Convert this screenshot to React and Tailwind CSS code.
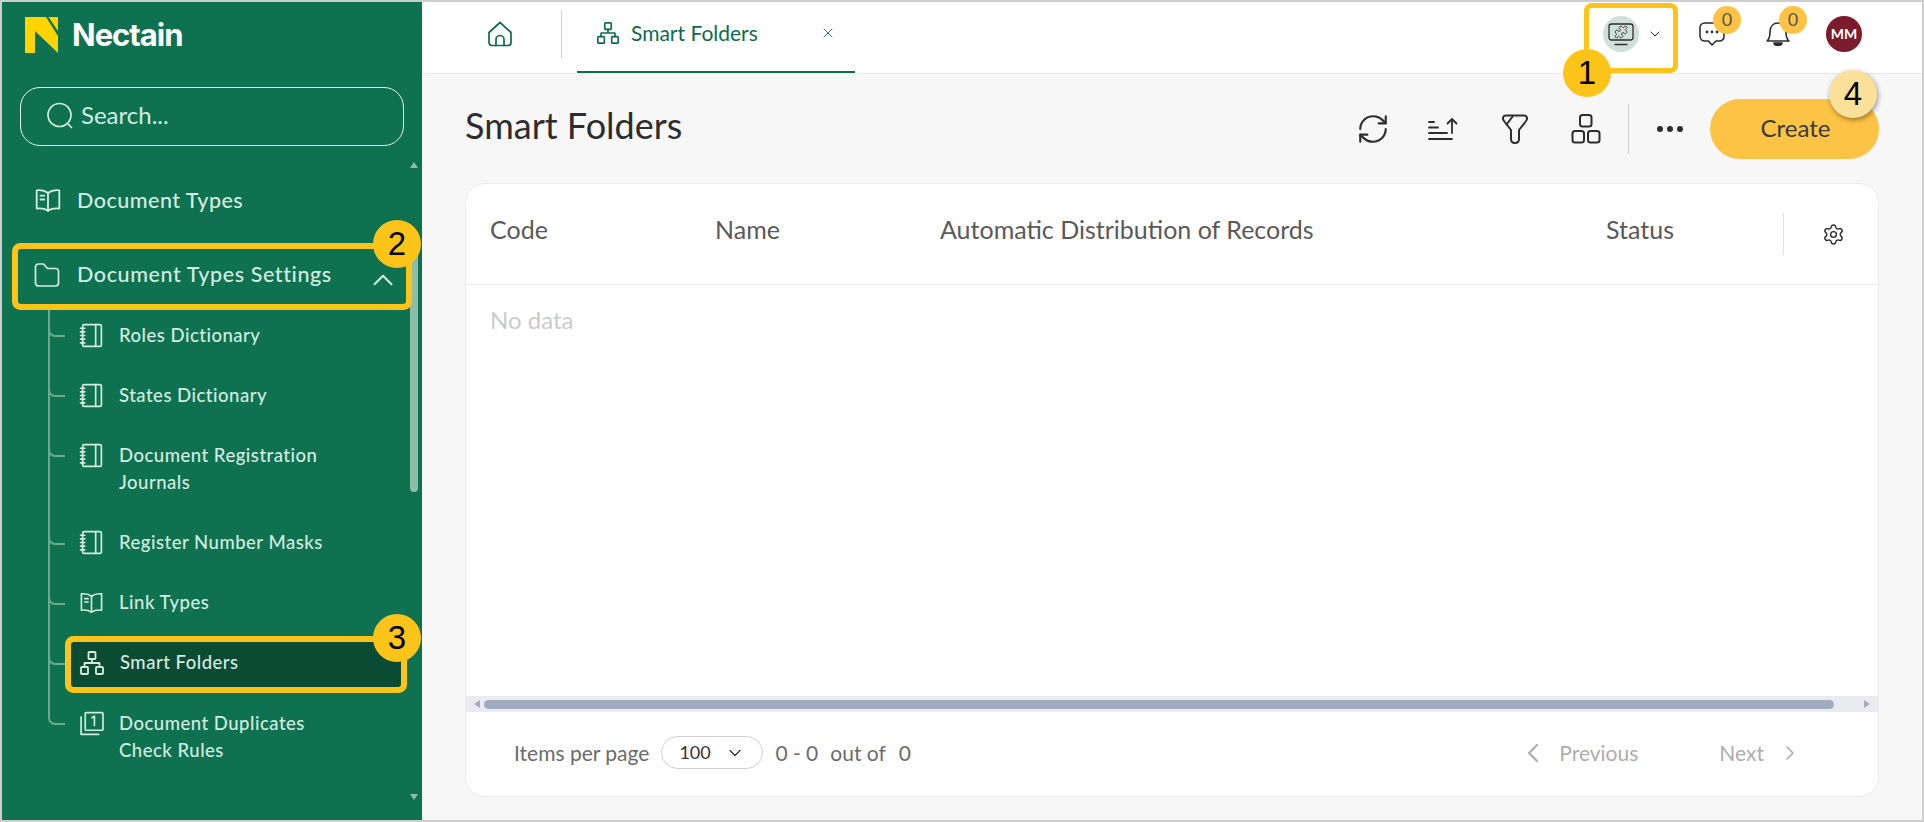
import React from 'react';
import { ChevronDown, ChevronLeft, ChevronRight, ChevronUp, Puzzle, RefreshCw, Settings, X } from 'lucide-react';

const Icon = ({ className, size = 24, view = 24, width = 1.7, children }) => (
    <svg width={size} height={size} viewBox={`0 0 ${view} ${view}`} fill="none" stroke="currentColor" strokeWidth={width} strokeLinecap="round" strokeLinejoin="round" className={className}>
        {children}
    </svg>
);

const Logo = () => (
    <svg width="33" height="36" viewBox="0 0 33 36">
        <path d="M0 0H21L33 19V36L10 14V36H0Z" fill="#ffd400" />
        <path d="M23.5 0H33V14Z" fill="#ffd400" />
    </svg>
);

const BookIcon = ({ size = 28 }) => (
    <Icon size={size} view={26} width={1.7}>
        <path d="M13 6.5C10.5 4.5 6.5 3.5 2.5 4V21C6.5 20.5 10 21 13 23C16 21 19.5 20.5 23.5 21V4C19.5 3.5 15.5 4.5 13 6.5Z" />
        <path d="M13 6.5V23M6 9H9.5M6 12.5H9.5" />
    </Icon>
);

const NotebookIcon = () => (
    <Icon size={25} width={1.6}>
        <rect x="3.5" y="1.5" width="18" height="21" rx="1.5" />
        <path d="M16 1.5V22.5M1.5 5H5.5M1.5 8.5H5.5M1.5 12H5.5M1.5 15.5H5.5M1.5 19H5.5" />
    </Icon>
);

const TreeIcon = ({ size = 26 }) => (
    <Icon size={size} view={26} width={1.8}>
        <rect x="9.5" y="2" width="7" height="7" rx="0.8" />
        <rect x="2" y="17" width="7" height="7" rx="0.8" />
        <rect x="17" y="17" width="7" height="7" rx="0.8" />
        <path d="M13 9V13M5.5 17V13H20.5V17" />
    </Icon>
);

const DuplicateIcon = () => (
    <Icon size={25} width={1.6}>
        <rect x="6" y="1.5" width="17" height="17" rx="1" />
        <path d="M2 5.5V22.5H19M12.5 6.5L14.8 5V14" />
    </Icon>
);

const HomeIcon = () => (
    <Icon size={28} view={28} width={1.7}>
        <path d="M3 12.5L14 2.5L25 12.5V22.5C25 24.5 23.5 25.5 22 25.5H6C4.5 25.5 3 24.5 3 22.5Z" />
        <path d="M10 25.5V19.5C10 17 12 15.5 14 15.5C16 15.5 18 17 18 19.5V25.5" />
    </Icon>
);

const WorkspaceIcon = () => (
    <Icon size={28} view={28} width={1.3}>
        <rect x="2" y="4" width="24" height="16" rx="2.5" />
        <path d="M8 24.5H20" />
        <Puzzle x="7" y="5" size={14} strokeWidth={1.4} />
    </Icon>
);

const ChatIcon = () => (
    <svg width="26" height="28" viewBox="0 0 26 28" fill="none" stroke="#2d2d2d" strokeWidth="1.6" strokeLinejoin="round">
        <path d="M6 3H20C23 3 25 5 25 8V16C25 19 23 21 20 21H17L13 25L9.5 21H6C3 21 1 19 1 16V8C1 5 3 3 6 3Z" />
        <circle cx="8" cy="12" r="0.6" fill="#2d2d2d" />
        <circle cx="13" cy="12" r="0.6" fill="#2d2d2d" />
        <circle cx="18" cy="12" r="0.6" fill="#2d2d2d" />
    </svg>
);

const BellIcon = () => (
    <svg width="26" height="28" viewBox="0 0 26 28" fill="none" stroke="#2d2d2d" strokeWidth="1.6" strokeLinejoin="round">
        <path d="M2 21C4.5 19 5 16 5 12C5 6 8.5 3 13 3C17.5 3 21 6 21 12C21 16 21.5 19 24 21Z" />
        <path d="M9 23H17C16.5 26 9.5 26 9 23Z" fill="#2d2d2d" />
    </svg>
);

const SortIcon = () => (
    <Icon size={32} view={32} width={1.8}>
        <path d="M1 9H6M1 14.5H10M1 20H19M1 26H24M24 20V6M19.5 10.5L24 6L28.5 10.5" />
    </Icon>
);

const FilterIcon = () => (
    <Icon size={32} view={32} width={2}>
        <path d="M7 2.5H25C28 2.5 29 5.5 27 8L20 17V26C20 28.5 18.5 30 16 30C13.5 30 12 28.5 12 26V17L5 8C3 5.5 4 2.5 7 2.5Z" />
        <path d="M14 3L7.5 11.5" />
    </Icon>
);

const AppsIcon = () => (
    <Icon size={32} view={32} width={2}>
        <rect x="10" y="2" width="11.5" height="11.5" rx="2.5" />
        <rect x="2.5" y="18" width="11.5" height="11.5" rx="2.5" />
        <rect x="18" y="18" width="11.5" height="11.5" rx="2.5" />
    </Icon>
);

const SearchIcon = () => (
    <Icon size={28} view={28} width={1.7}>
        <circle cx="13.5" cy="13" r="11.5" />
        <path d="M22 22L25.5 25.5" />
    </Icon>
);

const FolderIcon = () => (
    <Icon size={26} view={26} width={1.7}>
        <path d="M1.5 5C1.5 3 3 2 4.5 2H9.5L13.5 6.5H21.5C23.5 6.5 24.5 8 24.5 9.5V21C24.5 23 23 24 21.5 24H4.5C3 24 1.5 23 1.5 21Z" />
    </Icon>
);

const Marker = ({ n, className }) => (
    <div className={`absolute z-20 flex h-[48px] w-[48px] items-center justify-center rounded-full font-['Liberation_Sans',sans-serif] text-[33px] text-black ${className}`}>
        {n}
    </div>
);

const Badge = ({ className }) => (
    <span className={`absolute flex h-[28px] w-[28px] items-center justify-center rounded-full bg-[#fdc344] text-[18px] text-[#555] ${className}`}>0</span>
);

const children = [
    { label: 'Roles Dictionary', icon: <NotebookIcon /> },
    { label: 'States Dictionary', icon: <NotebookIcon /> },
    { label: 'Document Registration Journals', icon: <NotebookIcon /> },
    { label: 'Register Number Masks', icon: <NotebookIcon /> },
    { label: 'Link Types', icon: <BookIcon size={25} /> },
    { label: 'Smart Folders', icon: <TreeIcon size={26} />, active: true },
    { label: 'Document Duplicates Check Rules', icon: <DuplicateIcon /> },
];

function Sidebar() {
    return (
        <aside className="relative flex w-[420px] shrink-0 flex-col bg-[#0e7250] text-[#d5ebe1]">
            <div className="flex h-[85px] shrink-0 items-start gap-[14px] pl-[23px] pt-[15px]">
                <Logo />
                <span className="font-['Inter',sans-serif] pt-[1px] text-[31px] font-bold leading-[34px] tracking-[-1px] text-white">Nectain</span>
            </div>
            <div className="mx-[18px] flex h-[59px] shrink-0 items-center gap-[7px] rounded-[20px] border border-[#e6f2ec] pb-[2px] pl-[25px] text-[24px]">
                <SearchIcon />
                <span className="pb-[2px]">Search...</span>
            </div>

            <div className="mt-[23px] flex h-[62px] items-center gap-[15px] pl-[32px] text-[21.5px] font-medium tracking-[0.5px]">
                <BookIcon />
                <span>Document Types</span>
            </div>
            <div className="relative z-10 mx-[16px] mt-[18px] flex h-[55px] items-center gap-[17px] rounded-[3px] pb-[4px] pl-[16px] text-[21.5px] font-medium tracking-[0.6px] ring-[6px] ring-[#fcc419]">
                <FolderIcon />
                <span>Document Types Settings</span>
                <ChevronUp size={34} strokeWidth={1.4} className="absolute right-[6px] top-[14px]" />
            </div>

            <div className="relative mt-[1px]">
                <div className="absolute bottom-[62px] left-[46px] top-0 w-[2px] bg-[#6da892]" />
                {children.map((item) => (
                    <div key={item.label} className="relative flex py-[7px] pl-[69px] pr-[21px]">
                        <div className="absolute left-[46px] top-[24px] h-[8px] w-[17px] rounded-bl-[7px] border-b-2 border-l-2 border-[#6da892]" />
                        <div className={`flex flex-1 items-start gap-[15px] rounded-[3px] pl-[8px] text-[18.5px] font-medium leading-[27px] tracking-[0.5px] ${item.active ? 'mb-[-1px] mt-[2px] h-[45px] bg-[#0b4a33] pt-[7px] ring-[6px] ring-[#fcc419]' : 'py-[9.6px]'}`}>
                            <span className="mt-[1px] shrink-0">{item.icon}</span>
                            <span className="max-w-[225px]">{item.label}</span>
                        </div>
                    </div>
                ))}
            </div>

            {/* sidebar scrollbar */}
            <div className="absolute right-[4px] top-[160px] h-0 w-0 border-x-[4px] border-b-[6px] border-x-transparent border-b-[#8dbcab]" />
            <div className="absolute right-[4px] top-[250px] h-[240px] w-[8px] rounded-full bg-[#8dbcab]" />
            <div className="absolute bottom-[20px] right-[4px] h-0 w-0 border-x-[4px] border-t-[6px] border-x-transparent border-t-[#8dbcab]" />

            <Marker n="2" className="right-[1px] top-[218px] bg-[#fcc419]" />
            <Marker n="3" className="right-[1px] top-[612px] bg-[#fcc419]" />
        </aside>
    );
}

function TopBar() {
    return (
        <header className="relative flex h-[72px] shrink-0 items-center border-b border-[#e8e8e8] bg-white">
            <div className="mb-[7px] ml-[64px] text-[#0e6b4d]"><HomeIcon /></div>
            <div className="mb-[7px] ml-[47px] h-[48px] w-px bg-[#cfcfcf]" />
            <div className="ml-[15px] flex h-full w-[278px] items-center border-b-2 border-[#0e6b4d] pb-[7px] pl-[19px] text-[#0e6b4d]">
                <TreeIcon size={24} />
                <span className="ml-[11px] text-[21px]">Smart Folders</span>
                <X size={16} strokeWidth={1.3} className="ml-[62px]" />
            </div>
            <div className="ml-auto flex items-center pr-[60px]">
                <div className="relative flex h-[60px] w-[84px] items-center rounded-[3px] pb-[8px] pl-[14px] ring-[5px] ring-[#fcc419]">
                    <div className="flex h-[36px] w-[36px] items-center justify-center rounded-full bg-[#cfe0da] text-[#2d2d2d]"><WorkspaceIcon /></div>
                    <ChevronDown size={16} strokeWidth={1.5} className="ml-[8px] text-[#333]" />
                    <Marker n="1" className="bottom-[-29px] left-[-26px] bg-[#fcc419]" />
                </div>
                <div className="relative mb-[8px] ml-[26px]">
                    <ChatIcon />
                    <Badge className="right-[-16px] top-[-14px]" />
                </div>
                <div className="relative mb-[8px] ml-[40px]">
                    <BellIcon />
                    <Badge className="right-[-16px] top-[-14px]" />
                </div>
                <div className="mb-[8px] ml-[35px] flex h-[36px] w-[36px] items-center justify-center rounded-full bg-[#7a1c2b] text-[14px] font-bold text-white">MM</div>
            </div>
        </header>
    );
}

function Toolbar() {
    return (
        <div className="flex h-[109px] shrink-0 items-center">
            <h1 className="pb-[8px] text-[36px] leading-[42px] text-[#2d2d2d]">Smart Folders</h1>
            <div className="relative ml-auto flex items-center text-[#2d2d2d]">
                <div className="flex w-[71px] justify-center"><RefreshCw size={34} strokeWidth={1.5} /></div>
                <div className="flex w-[71px] justify-center"><SortIcon /></div>
                <div className="flex w-[71px] justify-center"><FilterIcon /></div>
                <div className="flex w-[71px] justify-center"><AppsIcon /></div>
                <div className="ml-[7px] h-[50px] w-px bg-[#cfcfcf]" />
                <div className="flex w-[81px] justify-center gap-[4px]">
                    <span className="h-[6px] w-[6px] rounded-full bg-[#2d2d2d]" />
                    <span className="h-[6px] w-[6px] rounded-full bg-[#2d2d2d]" />
                    <span className="h-[6px] w-[6px] rounded-full bg-[#2d2d2d]" />
                </div>
                <button className="flex h-[60px] w-[169px] items-center justify-center rounded-full bg-[#fdc344] pb-[2px] pl-[2px] text-[24px] text-[#3a3a3a]">Create</button>
                <Marker n="4" className="right-[2px] top-[-29px] bg-[#fbe09a] shadow-[1px_2px_5px_rgba(0,0,0,0.4)]" />
            </div>
        </div>
    );
}

function Table() {
    return (
        <div className="mb-[23px] flex min-h-0 flex-1 flex-col overflow-hidden rounded-[20px] border border-[#ececec] bg-white">
            <div className="flex h-[101px] shrink-0 items-center border-b border-[#ececec] pl-[24px] text-[25px] text-[#595959]">
                <span className="w-[225px] pb-[8px]">Code</span>
                <span className="w-[225px] pb-[8px]">Name</span>
                <span className="w-[666px] pb-[8px]">Automatic Distribution of Records</span>
                <span className="w-[177px] pb-[8px]">Status</span>
                <div className="h-[42px] w-px bg-[#e2e2e2]" />
                <Settings size={23} strokeWidth={1.5} className="ml-[38px] text-[#2d2d2d]" />
            </div>
            <div className="flex-1 pl-[24px] pt-[17px] text-[24px] text-[#cbcbcb]">No data</div>
            <div className="flex h-[16px] shrink-0 items-center bg-[#e9ebf1] px-[8px]">
                <div className="h-0 w-0 border-y-[4px] border-r-[6px] border-y-transparent border-r-[#a0abc0]" />
                <div className="ml-[4px] h-[9px] flex-1 rounded-full bg-[#a0abc0]" />
                <div className="ml-[30px] h-0 w-0 border-y-[4px] border-l-[6px] border-y-transparent border-l-[#a0abc0]" />
            </div>
            <div className="flex h-[84px] shrink-0 items-center pb-[3px] pl-[48px] text-[21px] text-[#6b6b6b]">
                <span>Items per page</span>
                <div className="ml-[12px] flex h-[33px] w-[102px] items-center rounded-full border border-[#cfcfcf] pl-[17px] text-[18px] text-[#333]">
                    100
                    <ChevronDown size={20} strokeWidth={1.5} className="ml-[14px]" />
                </div>
                <span className="ml-[12px]">0 - 0</span>
                <span className="ml-[12px]">out of</span>
                <span className="ml-[13px]">0</span>
                <div className="ml-auto flex items-center text-[#adadad]">
                    <ChevronLeft size={32} strokeWidth={1.6} />
                    <span className="ml-[10px]">Previous</span>
                    <span className="ml-[81px]">Next</span>
                    <ChevronRight size={24} strokeWidth={1.6} className="ml-[14px]" />
                </div>
                <div className="w-[76px]" />
            </div>
        </div>
    );
}

export default function App() {
    return (
        <div className="flex h-[822px] w-[1924px] overflow-hidden border-2 border-[#cdcdcd] bg-[#f7f7f7] font-['Lato',sans-serif]">
            <Sidebar />
            <main className="flex min-w-0 flex-1 flex-col">
                <TopBar />
                <div className="flex min-h-0 flex-1 flex-col px-[43px]">
                    <Toolbar />
                    <Table />
                </div>
            </main>
        </div>
    );
}
